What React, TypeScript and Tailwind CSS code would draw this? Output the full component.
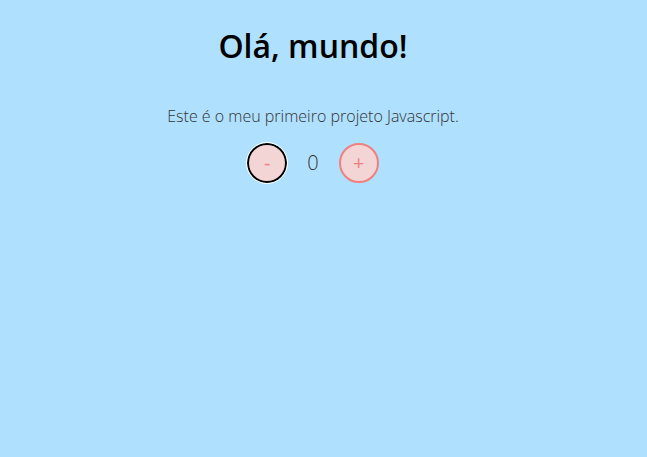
import React, { useState } from "react";

export default function App() {
  const [count, setCount] = useState(0);
  return (
    <div
      className="min-h-[457px] w-full bg-[#afe0fe] pr-[21px] text-center"
      style={{ fontFamily: '"Open Sans", sans-serif' }}
    >
      <div className="flex flex-col items-center pt-[26px]">
        <h1 className="text-[32px] font-semibold leading-[40px] text-black">Olá, mundo!</h1>
        <p className="mt-[39px] text-[16px] font-light leading-[22px] text-[#333]">
          Este é o meu primeiro projeto Javascript.
        </p>
        <div className="mt-[16px] flex items-center gap-[20px]">
          <button
            onClick={() => setCount(count - 1)}
            className="flex h-[40px] w-[40px] items-center justify-center rounded-full border-2 border-black bg-[#f4d5d6] text-[20px] font-medium leading-none text-[#f08080] outline outline-1 outline-white"
          >
            -
          </button>
          <span className="text-[20px] font-light text-[#333]">{count}</span>
          <button
            onClick={() => setCount(count + 1)}
            className="flex h-[40px] w-[40px] items-center justify-center rounded-full border-2 border-[#f08080] bg-[#f4d5d6] text-[20px] font-medium leading-none text-[#f08080]"
          >
            +
          </button>
        </div>
      </div>
    </div>
  );
}
